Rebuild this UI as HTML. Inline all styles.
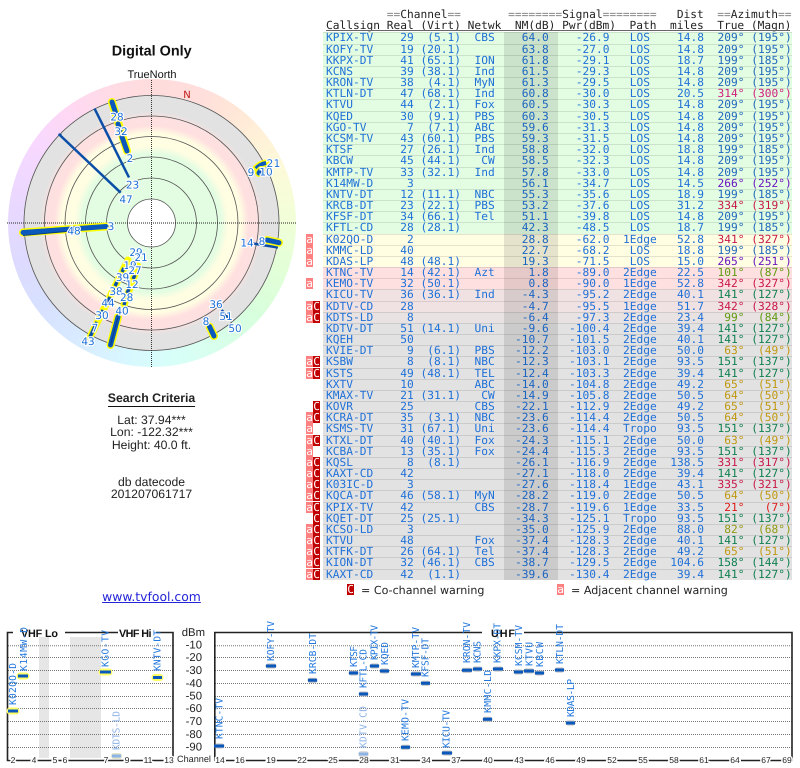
<!DOCTYPE html>
<html><head><meta charset="utf-8"><title>Digital Only</title>
<style>
html,body{margin:0;padding:0;background:#fff;width:800px;height:768px;overflow:hidden}
#w{position:relative;width:800px;height:768px;overflow:hidden;filter:blur(.3px);text-rendering:geometricPrecision}
.wheel{position:absolute;left:7.5px;top:79px;width:288px;height:288px;border-radius:50%;
background:conic-gradient(#ffdcdc 0deg,#ffdedc 20deg,#ffe6d8 35deg,#fff0d8 50deg,#fbfbd8 70deg,#f0ffd8 90deg,#e2ffd8 110deg,#d8ffdc 130deg,#d8ffea 150deg,#d8fff8 170deg,#d8f8ff 190deg,#d8ecff 210deg,#d8e0ff 235deg,#dedaff 255deg,#ead8ff 280deg,#f8d8ff 305deg,#ffd8f2 325deg,#ffdce4 345deg,#ffdcdc 360deg)}
svg{position:absolute;left:0;top:0}
.y{stroke:#ff0;stroke-width:8;stroke-linecap:round;fill:none}
.bl{stroke:#0a58bc;stroke-width:5;stroke-linecap:round;fill:none}
.th{stroke:#0a4ea8;stroke-width:2.5;fill:none}
.yt{stroke:#ff0;stroke-width:7;stroke-linecap:round;fill:none}
.bs{stroke:#0a4ea8;stroke-width:3.5;fill:none}
.rg{fill:none;stroke:#555;stroke-width:.8}
.n{font:10.5px "DejaVu Sans",sans-serif;fill:#1f70d8;stroke:#fff;stroke-width:2.2;paint-order:stroke;text-anchor:middle}
.s{font-family:"Liberation Sans",sans-serif;fill:#111}
.lb{font:9.6px "DejaVu Sans Mono",monospace;fill:#2278de}
.pl{fill:#8db3e6}
.gl{stroke:#777;stroke-width:1;stroke-dasharray:1 1}
.bx{stroke:#222;stroke-width:1.6;fill:none}
.db{font:11.3px "Liberation Sans",sans-serif;fill:#222;text-anchor:end}
.ch{font:8.5px "Liberation Sans",sans-serif;fill:#222;text-anchor:middle;stroke:#fff;stroke-width:3;paint-order:stroke}
.hb{font:bold 10.8px "Liberation Sans",sans-serif;fill:#111}
.h1{stroke:#bbb;stroke-width:5;stroke-linecap:round}
.h2{stroke:#ff6;stroke-width:7;stroke-linecap:round}
.h3{stroke:#0a58bc;stroke-width:3}
.h4{stroke:#8db3e6;stroke-width:3}
.h5{stroke:#e4e4c8;stroke-width:6;stroke-linecap:round}
pre{position:absolute;margin:0;font:11.21px/11px "DejaVu Sans Mono",monospace;color:#222}
pre u{text-decoration:none;color:#888}
table{position:absolute;left:323px;top:32px;width:468.75px;border-collapse:separate;border-spacing:0;table-layout:fixed;font:11.21px/11px "DejaVu Sans Mono",monospace;color:#1f70d8}
td{padding:0;height:11px;box-sizing:border-box;white-space:pre;vertical-align:top;text-align:right;overflow:visible;border-top:1px solid rgba(0,0,0,.1);line-height:10px}
td:first-child{text-align:left;padding-left:3px}
td.c{text-align:center}
tr.t td{height:12px}
tr.g{background:#e2fde2}tr.e{background:#fffde2}tr.p{background:#ffe0e0}tr.q{background:#f0e2e2}tr.x{background:#e8e2e2}tr.d{background:#e2e2e2}
.nm{position:absolute;left:504px;top:32px;width:54px;height:548px;background:rgba(0,0,0,.1)}
.bb{color:#2268bc}.m{color:#d0207c}.cr{color:#c81848}.pu{color:#6a14c0}.ol{color:#5f9a10}.gr{color:#108050}.go{color:#c09810}.re{color:#e01818}.ly{color:#909a10}
.w{position:absolute;width:7px;height:11px;color:#fff;font:11px/11px "DejaVu Sans Mono",monospace;text-align:center}
.wa{left:306px;background:#ff8080}.wc{left:313px;background:#c00000}
.tx{position:absolute;left:0;width:303px;text-align:center;font:12.2px/13px "Liberation Sans",sans-serif;color:#222}
.lg{position:absolute;top:584px;font:11.1px/13px "DejaVu Sans",sans-serif;color:#222;white-space:pre}
</style></head><body><div id="w">

<div class="wheel"></div>
<svg width="800" height="768" viewBox="0 0 800 768">
<defs><radialGradient id="rd" gradientUnits="userSpaceOnUse" cx="151.5" cy="223" r="128">
<stop offset="0" stop-color="#e2fde2"/><stop offset=".54" stop-color="#e2fde2"/><stop offset=".6" stop-color="#fffde2"/><stop offset=".7" stop-color="#fffde2"/><stop offset=".76" stop-color="#ffe0e0"/><stop offset=".82" stop-color="#ffe0e0"/><stop offset=".87" stop-color="#e2e2e2"/><stop offset="1" stop-color="#e2e2e2"/></radialGradient></defs>
<text class="s" x="151.7" y="55.5" font-size="14.4" font-weight="bold" text-anchor="middle">Digital Only</text>
<text class="s" x="152" y="78" font-size="11" text-anchor="middle" fill="#222">TrueNorth</text>
<circle cx="151.5" cy="223" r="128" fill="url(#rd)"/>
<circle cx="151.5" cy="223" r="24" fill="#fff"/>
<circle class="rg" cx="151.5" cy="223" r="24"/><circle class="rg" cx="151.5" cy="223" r="45"/><circle class="rg" cx="151.5" cy="223" r="66"/><circle class="rg" cx="151.5" cy="223" r="86.5"/><circle class="rg" cx="151.5" cy="223" r="107"/><circle class="rg" cx="151.5" cy="223" r="127.5"/>
<line x1="7" y1="223" x2="296" y2="223" stroke="#222" stroke-width=".9" stroke-dasharray="1 1"/>
<line x1="151.5" y1="80" x2="151.5" y2="367" stroke="#222" stroke-width=".9" stroke-dasharray="1 1"/>
<text x="187" y="98" font-family="DejaVu Sans,sans-serif" font-size="10" fill="#c01818" text-anchor="middle">N</text>

<line class="y" x1="112" y1="102" x2="127" y2="151"/>
<line class="bl" x1="112" y1="102" x2="116" y2="114"/><line class="bl" x1="118" y1="124" x2="120" y2="130"/><line class="bl" x1="122" y1="137" x2="127" y2="151"/>
<line class="th" x1="94.5" y1="108.5" x2="129" y2="177.5"/>
<line class="th" x1="58.7" y1="134" x2="120.7" y2="192.7"/>
<path d="M58.5 133.5l3.5.5-2 2.5z" fill="#0a4ea8"/>
<line class="y" x1="23" y1="232.5" x2="106" y2="226.5"/>
<line class="bl" x1="23" y1="232.5" x2="106" y2="226.5" stroke-width="5"/>
<line x1="23" y1="235.5" x2="72" y2="231" stroke="#0a3c80" stroke-width="1"/>
<path d="M256 168.5Q260 164 266 163" class="yt" stroke-width="8"/><path d="M256 168.5Q260 164 266 163" stroke="#0a58bc" stroke-width="4" fill="none"/>
<line class="y" x1="259" y1="173" x2="261" y2="170" stroke-width="6"/><line class="bl" x1="259" y1="173" x2="261" y2="170" stroke-width="3"/>
<line class="th" x1="253" y1="243.5" x2="278" y2="247.5"/>
<line class="y" x1="267" y1="240" x2="279" y2="242.7"/><line class="bl" x1="267" y1="240" x2="279" y2="242.7"/>

<line class="yt" x1="128" y1="260" x2="90" y2="337"/>
<line class="bs" x1="124" y1="268" x2="122" y2="272"/><line class="bs" x1="117" y1="282" x2="115" y2="286"/><line class="bs" x1="110" y1="297" x2="107" y2="303"/><line class="bs" x1="103" y1="310" x2="100" y2="316"/><line class="bs" x1="97" y1="322" x2="90" y2="337"/>
<line class="yt" x1="138" y1="266" x2="124" y2="305"/>
<line class="bs" x1="135" y1="275" x2="133" y2="279"/><line class="bs" x1="129" y1="289" x2="127" y2="293"/><line class="bs" x1="125" y1="301" x2="124" y2="305"/>
<line class="y" x1="118" y1="317" x2="110.5" y2="345"/><line class="bl" x1="118" y1="317" x2="110.5" y2="345"/>
<line x1="118" y1="317" x2="110.5" y2="345" stroke="#0a3c80" stroke-width="1"/>
<line class="y" x1="209.5" y1="326.5" x2="214" y2="336"/><line class="bl" x1="209.5" y1="326.5" x2="214" y2="336"/>
<line class="th" x1="221.7" y1="310" x2="230" y2="320" stroke-width="2"/>

<text class="n" x="117" y="120.5">28</text><text class="n" x="121" y="135">32</text><text class="n" x="130" y="162">2</text><text class="n" x="132.5" y="188.5">23</text><text class="n" x="126" y="203">47</text><text class="n" x="111" y="230">3</text><text class="n" x="74" y="234.5">48</text><text class="n" x="247" y="246.5">14</text><text class="n" x="262" y="245">8</text><text class="n" x="251" y="176">9</text><text class="n" x="266" y="175.5">10</text><text class="n" x="270" y="167">2</text><text class="n" x="277" y="167">1</text>
<text class="n" x="136" y="256">29</text><text class="n" x="141" y="261">21</text><text class="n" x="130" y="269">19</text><text class="n" x="135" y="274">27</text><text class="n" x="122.5" y="281">39</text><text class="n" x="132" y="288">12</text><text class="n" x="116" y="295">38</text><text class="n" x="126.7" y="301">28</text><text class="n" x="108" y="306.5">44</text><text class="n" x="122" y="314.5">40</text><text class="n" x="102" y="319">30</text><text class="n" x="95" y="331.5">7</text><text class="n" x="88" y="345">43</text><text class="n" x="216" y="308">36</text><text class="n" x="226" y="320">51</text><text class="n" x="235" y="332">50</text><text class="n" x="206" y="325">8</text>

<!-- bottom chart bands and grid -->
<rect x="39" y="637" width="10" height="121" fill="#e6e6e6"/><rect x="70" y="637" width="31" height="121" fill="#e6e6e6"/>
<path class="gl" d="M8 645.7H173M8 657.5H173M8 670.5H173M8 683.5H173M8 696.5H173M8 708.5H173M8 721.5H173M8 734.5H173M8 747.5H173"/>
<path class="gl" d="M215 645.7H792M215 657.5H792M215 670.5H792M215 683.5H792M215 696.5H792M215 708.5H792M215 721.5H792M215 734.5H792M215 747.5H792"/>
<path class="bx" d="M13 632.5H7.5V760.5H173V632.5H156M65 632.5H118"/>
<path class="bx" d="M482 632.5H214.8V760.5H792V632.5H524"/>
<text class="hb" x="21" y="637" textLength="37">VHF Lo</text><text class="hb" x="119" y="637" textLength="32.5">VHF Hi</text><text class="hb" x="491" y="637" textLength="24">UHF</text>
<text class="db" x="205" y="636">dBm</text><text class="db" x="202" y="648.5">-10</text><text class="db" x="202" y="661">-20</text><text class="db" x="202" y="674">-30</text><text class="db" x="202" y="687">-40</text><text class="db" x="202" y="699.5">-50</text><text class="db" x="202" y="712">-60</text><text class="db" x="202" y="725">-70</text><text class="db" x="202" y="738">-80</text><text class="db" x="202" y="750.5">-90</text>
<g>
<text class="ch" x="13" y="763">2</text><text class="ch" x="34" y="763">4</text><text class="ch" x="55" y="763">5</text><text class="ch" x="65" y="763">6</text><text class="ch" x="106" y="763">7</text><text class="ch" x="127" y="763">9</text><text class="ch" x="148" y="763">11</text><text class="ch" x="169" y="763">13</text>
<text class="ch" x="194" y="762" style="font-size:9.1px">Channel</text>
<text class="ch" x="220" y="763">14</text><text class="ch" x="240" y="763">16</text><text class="ch" x="271" y="763">19</text><text class="ch" x="302" y="763">22</text><text class="ch" x="333" y="763">25</text><text class="ch" x="364" y="763">28</text><text class="ch" x="395" y="763">31</text><text class="ch" x="426" y="763">34</text><text class="ch" x="456" y="763">37</text><text class="ch" x="488" y="763">40</text><text class="ch" x="519" y="763">43</text><text class="ch" x="550" y="763">46</text><text class="ch" x="581" y="763">49</text><text class="ch" x="612" y="763">52</text><text class="ch" x="643" y="763">55</text><text class="ch" x="674" y="763">58</text><text class="ch" x="704" y="763">61</text><text class="ch" x="735" y="763">64</text><text class="ch" x="766" y="763">67</text><text class="ch" x="787" y="763">69</text>
</g>
<!-- VHF bars -->
<path class="h2" d="M10 711H16M20 676H26M102 672H109M155 677.5H160"/>
<path class="h3" d="M8 711H18M18 676H28M100 672H111M153 677.5H162"/>
<path class="h5" d="M114 756H119"/><path class="h4" d="M112 756H121"/>
<!-- UHF bars -->
<path class="h1" d="M217 746H222M268 666H274M310 680.3H315M351 673H356M361 694H366M372 666H377M382 671H387M403 747.3H408M413 674H419M423 683.3H428M444 753H450M464 670.3H470M475 669H480M485 719.3H490M495 669H501M516 672H521M526 671H532M537 673H542M557 670H562M568 723H573"/>
<path class="h3" d="M214 746H224M266 666H276M308 680.3H317M349 673H358M359 694H368M370 666H379M380 671H389M401 747.3H410M411 674H421M421 683.3H430M442 753H452M462 670.3H472M473 669H482M483 719.3H492M493 669H503M514 672H523M524 671H534M535 673H544M555 670H564M566 723H575"/>
<path class="h5" style="stroke:#ddd" d="M361 754H366"/><path class="h4" d="M359 754H368"/>
<!-- labels -->
<text class="lb" transform="translate(16,705) rotate(-90)" textLength="42">K02QO-D</text>
<text class="lb" transform="translate(27,671) rotate(-90)" textLength="44">K14MW-D</text>
<text class="lb" transform="translate(108.5,667) rotate(-90)" textLength="37">KGO-TV</text>
<text class="lb" transform="translate(160.5,671) rotate(-90)" textLength="41">KNTV-DT</text>
<text class="lb pl" transform="translate(119.5,750) rotate(-90)" textLength="39">KDTS-LD</text>
<text class="lb" transform="translate(222.5,739) rotate(-90)" textLength="41">KTNC-TV</text>
<text class="lb" transform="translate(274,661) rotate(-90)" textLength="40">KOFY-TV</text>
<text class="lb" transform="translate(316,674) rotate(-90)" textLength="41">KRCB-DT</text>
<text class="lb" transform="translate(357,667) rotate(-90)" textLength="21">KTSF</text>
<text class="lb" transform="translate(366.5,688) rotate(-90)" textLength="39">KFTL-CD</text>
<text class="lb" transform="translate(377.5,660) rotate(-90)" textLength="35">KPIX-TV</text>
<text class="lb" transform="translate(388,665) rotate(-90)" textLength="23">KQED</text>
<text class="lb pl" transform="translate(366.5,748) rotate(-90)" textLength="42">KDTV-CD</text>
<text class="lb" transform="translate(408.5,741) rotate(-90)" textLength="42">KEMO-TV</text>
<text class="lb" transform="translate(419,668) rotate(-90)" textLength="41">KMTP-TV</text>
<text class="lb" transform="translate(428.5,677) rotate(-90)" textLength="39">KFSF-DT</text>
<text class="lb" transform="translate(449.5,748) rotate(-90)" textLength="38">KICU-TV</text>
<text class="lb" transform="translate(470,663) rotate(-90)" textLength="41">KRON-TV</text>
<text class="lb" transform="translate(480.5,663) rotate(-90)" textLength="22">KCNS</text>
<text class="lb" transform="translate(491,713) rotate(-90)" textLength="43">KMMC-LD</text>
<text class="lb" transform="translate(500.5,663) rotate(-90)" textLength="40">KKPX-DT</text>
<text class="lb" transform="translate(522,666) rotate(-90)" textLength="41">KCSM-TV</text>
<text class="lb" transform="translate(532.5,666) rotate(-90)" textLength="24">KTVU</text>
<text class="lb" transform="translate(543,667) rotate(-90)" textLength="25">KBCW</text>
<text class="lb" transform="translate(563,664) rotate(-90)" textLength="40">KTLN-DT</text>
<text class="lb" transform="translate(574,717) rotate(-90)" textLength="38">KDAS-LP</text>
</svg>

<div class="tx" style="top:391.5px;font-weight:bold;font-size:12.3px"><span style="border-bottom:1.5px solid #111;padding-bottom:1px">Search Criteria</span></div>
<div class="tx" style="top:413.5px">Lat: 37.94***<br></div>
<div class="tx" style="top:426px">Lon: -122.32***</div>
<div class="tx" style="top:438.5px">Height: 40.0 ft.</div>
<div class="tx" style="top:475.5px">db datecode</div>
<div class="tx" style="top:487.5px">201207061717</div>
<div class="tx" style="top:590px;font:12.4px/14px 'DejaVu Sans',sans-serif;color:#2424d8;text-decoration:underline">www.tvfool.com</div>

<pre style="left:326px;top:9px">         <u>==</u>Channel<u>==</u>       <u>========</u>Signal<u>========</u>   Dist  <u>==</u>Azimuth<u>==</u></pre>
<pre style="left:326px;top:20px">Callsign Real (Virt) Netwk  NM(dB) Pwr(dBm)  Path  miles  True (Magn)</pre>
<div style="position:absolute;left:326px;top:30px;width:464px;height:1px;background:#666"></div>

<table>
<colgroup><col style="width:63.75px"><col style="width:27px"><col style="width:47.25px"><col style="width:47.25px"><col style="width:40.5px"><col style="width:60.75px"><col style="width:60.75px"><col style="width:33.75px"><col style="width:40.5px"><col style="width:47.25px"></colgroup>
<tr class="g t"><td>KPIX-TV</td><td>29</td><td>(5.1)</td><td class="c">CBS</td><td>64.0</td><td>-26.9</td><td class="c">LOS</td><td>14.8</td><td class="bb">209°</td><td class="bb">(195°)</td></tr>
<tr class="g"><td>KOFY-TV</td><td>19</td><td>(20.1)</td><td class="c"></td><td>63.8</td><td>-27.0</td><td class="c">LOS</td><td>14.8</td><td class="bb">209°</td><td class="bb">(195°)</td></tr>
<tr class="g"><td>KKPX-DT</td><td>41</td><td>(65.1)</td><td class="c">ION</td><td>61.8</td><td>-29.1</td><td class="c">LOS</td><td>18.7</td><td class="bb">199°</td><td class="bb">(185°)</td></tr>
<tr class="g"><td>KCNS</td><td>39</td><td>(38.1)</td><td class="c">Ind</td><td>61.5</td><td>-29.3</td><td class="c">LOS</td><td>14.8</td><td class="bb">209°</td><td class="bb">(195°)</td></tr>
<tr class="g"><td>KRON-TV</td><td>38</td><td>(4.1)</td><td class="c">MyN</td><td>61.3</td><td>-29.5</td><td class="c">LOS</td><td>14.8</td><td class="bb">209°</td><td class="bb">(195°)</td></tr>
<tr class="g"><td>KTLN-DT</td><td>47</td><td>(68.1)</td><td class="c">Ind</td><td>60.8</td><td>-30.0</td><td class="c">LOS</td><td>20.5</td><td class="m">314°</td><td class="m">(300°)</td></tr>
<tr class="g t"><td>KTVU</td><td>44</td><td>(2.1)</td><td class="c">Fox</td><td>60.5</td><td>-30.3</td><td class="c">LOS</td><td>14.8</td><td class="bb">209°</td><td class="bb">(195°)</td></tr>
<tr class="g"><td>KQED</td><td>30</td><td>(9.1)</td><td class="c">PBS</td><td>60.3</td><td>-30.5</td><td class="c">LOS</td><td>14.8</td><td class="bb">209°</td><td class="bb">(195°)</td></tr>
<tr class="g"><td>KGO-TV</td><td>7</td><td>(7.1)</td><td class="c">ABC</td><td>59.6</td><td>-31.3</td><td class="c">LOS</td><td>14.8</td><td class="bb">209°</td><td class="bb">(195°)</td></tr>
<tr class="g"><td>KCSM-TV</td><td>43</td><td>(60.1)</td><td class="c">PBS</td><td>59.3</td><td>-31.5</td><td class="c">LOS</td><td>14.8</td><td class="bb">209°</td><td class="bb">(195°)</td></tr>
<tr class="g"><td>KTSF</td><td>27</td><td>(26.1)</td><td class="c">Ind</td><td>58.8</td><td>-32.0</td><td class="c">LOS</td><td>18.8</td><td class="bb">199°</td><td class="bb">(185°)</td></tr>
<tr class="g t"><td>KBCW</td><td>45</td><td>(44.1)</td><td class="c"> CW</td><td>58.5</td><td>-32.3</td><td class="c">LOS</td><td>14.8</td><td class="bb">209°</td><td class="bb">(195°)</td></tr>
<tr class="g"><td>KMTP-TV</td><td>33</td><td>(32.1)</td><td class="c">Ind</td><td>57.8</td><td>-33.0</td><td class="c">LOS</td><td>14.8</td><td class="bb">209°</td><td class="bb">(195°)</td></tr>
<tr class="g"><td>K14MW-D</td><td>3</td><td></td><td class="c"></td><td>56.1</td><td>-34.7</td><td class="c">LOS</td><td>14.5</td><td class="pu">266°</td><td class="pu">(252°)</td></tr>
<tr class="g"><td>KNTV-DT</td><td>12</td><td>(11.1)</td><td class="c">NBC</td><td>55.3</td><td>-35.6</td><td class="c">LOS</td><td>18.9</td><td class="bb">199°</td><td class="bb">(185°)</td></tr>
<tr class="g"><td>KRCB-DT</td><td>23</td><td>(22.1)</td><td class="c">PBS</td><td>53.2</td><td>-37.6</td><td class="c">LOS</td><td>31.2</td><td class="cr">334°</td><td class="cr">(319°)</td></tr>
<tr class="g"><td>KFSF-DT</td><td>34</td><td>(66.1)</td><td class="c">Tel</td><td>51.1</td><td>-39.8</td><td class="c">LOS</td><td>14.8</td><td class="bb">209°</td><td class="bb">(195°)</td></tr>
<tr class="g t"><td>KFTL-CD</td><td>28</td><td>(28.1)</td><td class="c"></td><td>42.3</td><td>-48.5</td><td class="c">LOS</td><td>18.7</td><td class="bb">199°</td><td class="bb">(185°)</td></tr>
<tr class="e"><td>K02QO-D</td><td>2</td><td></td><td class="c"></td><td>28.8</td><td>-62.0</td><td class="c">1Edge</td><td>52.8</td><td class="cr">341°</td><td class="cr">(327°)</td></tr>
<tr class="e"><td>KMMC-LD</td><td>40</td><td></td><td class="c"></td><td>22.7</td><td>-68.2</td><td class="c">LOS</td><td>18.8</td><td class="bb">199°</td><td class="bb">(185°)</td></tr>
<tr class="e"><td>KDAS-LP</td><td>48</td><td>(48.1)</td><td class="c"></td><td>19.3</td><td>-71.5</td><td class="c">LOS</td><td>15.0</td><td class="pu">265°</td><td class="pu">(251°)</td></tr>
<tr class="p"><td>KTNC-TV</td><td>14</td><td>(42.1)</td><td class="c">Azt</td><td>1.8</td><td>-89.0</td><td class="c">2Edge</td><td>22.5</td><td class="ol">101°</td><td class="ol">(87°)</td></tr>
<tr class="p"><td>KEMO-TV</td><td>32</td><td>(50.1)</td><td class="c"></td><td>0.8</td><td>-90.0</td><td class="c">1Edge</td><td>52.8</td><td class="cr">342°</td><td class="cr">(327°)</td></tr>
<tr class="q t"><td>KICU-TV</td><td>36</td><td>(36.1)</td><td class="c">Ind</td><td>-4.3</td><td>-95.2</td><td class="c">2Edge</td><td>40.1</td><td class="gr">141°</td><td class="gr">(127°)</td></tr>
<tr class="q"><td>KDTV-CD</td><td>28</td><td></td><td class="c"></td><td>-4.7</td><td>-95.5</td><td class="c">1Edge</td><td>51.7</td><td class="cr">342°</td><td class="cr">(328°)</td></tr>
<tr class="x"><td>KDTS-LD</td><td>8</td><td></td><td class="c"></td><td>-6.4</td><td>-97.3</td><td class="c">2Edge</td><td>23.4</td><td class="ol">99°</td><td class="ol">(84°)</td></tr>
<tr class="d"><td>KDTV-DT</td><td>51</td><td>(14.1)</td><td class="c">Uni</td><td>-9.6</td><td>-100.4</td><td class="c">2Edge</td><td>39.4</td><td class="gr">141°</td><td class="gr">(127°)</td></tr>
<tr class="d"><td>KQEH</td><td>50</td><td></td><td class="c"></td><td>-10.7</td><td>-101.5</td><td class="c">2Edge</td><td>40.1</td><td class="gr">141°</td><td class="gr">(127°)</td></tr>
<tr class="d"><td>KVIE-DT</td><td>9</td><td>(6.1)</td><td class="c">PBS</td><td>-12.2</td><td>-103.0</td><td class="c">2Edge</td><td>50.0</td><td class="go">63°</td><td class="go">(49°)</td></tr>
<tr class="d t"><td>KSBW</td><td>8</td><td>(8.1)</td><td class="c">NBC</td><td>-12.3</td><td>-103.1</td><td class="c">2Edge</td><td>93.5</td><td class="gr">151°</td><td class="gr">(137°)</td></tr>
<tr class="d"><td>KSTS</td><td>49</td><td>(48.1)</td><td class="c">TEL</td><td>-12.4</td><td>-103.3</td><td class="c">2Edge</td><td>39.4</td><td class="gr">141°</td><td class="gr">(127°)</td></tr>
<tr class="d"><td>KXTV</td><td>10</td><td></td><td class="c">ABC</td><td>-14.0</td><td>-104.8</td><td class="c">2Edge</td><td>49.2</td><td class="go">65°</td><td class="go">(51°)</td></tr>
<tr class="d"><td>KMAX-TV</td><td>21</td><td>(31.1)</td><td class="c"> CW</td><td>-14.9</td><td>-105.8</td><td class="c">2Edge</td><td>50.5</td><td class="go">64°</td><td class="go">(50°)</td></tr>
<tr class="d"><td>KOVR</td><td>25</td><td></td><td class="c">CBS</td><td>-22.1</td><td>-112.9</td><td class="c">2Edge</td><td>49.2</td><td class="go">65°</td><td class="go">(51°)</td></tr>
<tr class="d"><td>KCRA-DT</td><td>35</td><td>(3.1)</td><td class="c">NBC</td><td>-23.6</td><td>-114.4</td><td class="c">2Edge</td><td>50.5</td><td class="go">64°</td><td class="go">(50°)</td></tr>
<tr class="d t"><td>KSMS-TV</td><td>31</td><td>(67.1)</td><td class="c">Uni</td><td>-23.6</td><td>-114.4</td><td class="c">Tropo</td><td>93.5</td><td class="gr">151°</td><td class="gr">(137°)</td></tr>
<tr class="d"><td>KTXL-DT</td><td>40</td><td>(40.1)</td><td class="c">Fox</td><td>-24.3</td><td>-115.1</td><td class="c">2Edge</td><td>50.0</td><td class="go">63°</td><td class="go">(49°)</td></tr>
<tr class="d"><td>KCBA-DT</td><td>13</td><td>(35.1)</td><td class="c">Fox</td><td>-24.4</td><td>-115.3</td><td class="c">2Edge</td><td>93.5</td><td class="gr">151°</td><td class="gr">(137°)</td></tr>
<tr class="d"><td>KQSL</td><td>8</td><td>(8.1)</td><td class="c"></td><td>-26.1</td><td>-116.9</td><td class="c">2Edge</td><td>138.5</td><td class="cr">331°</td><td class="cr">(317°)</td></tr>
<tr class="d"><td>KAXT-CD</td><td>42</td><td></td><td class="c"></td><td>-27.1</td><td>-118.0</td><td class="c">2Edge</td><td>39.4</td><td class="gr">141°</td><td class="gr">(127°)</td></tr>
<tr class="d"><td>K03IC-D</td><td>3</td><td></td><td class="c"></td><td>-27.6</td><td>-118.4</td><td class="c">1Edge</td><td>43.1</td><td class="cr">335°</td><td class="cr">(321°)</td></tr>
<tr class="d t"><td>KQCA-DT</td><td>46</td><td>(58.1)</td><td class="c">MyN</td><td>-28.2</td><td>-119.0</td><td class="c">2Edge</td><td>50.5</td><td class="go">64°</td><td class="go">(50°)</td></tr>
<tr class="d"><td>KPIX-TV</td><td>42</td><td></td><td class="c">CBS</td><td>-28.7</td><td>-119.6</td><td class="c">1Edge</td><td>33.5</td><td class="re">21°</td><td class="re">(7°)</td></tr>
<tr class="d"><td>KQET-DT</td><td>25</td><td>(25.1)</td><td class="c"></td><td>-34.3</td><td>-125.1</td><td class="c">Tropo</td><td>93.5</td><td class="gr">151°</td><td class="gr">(137°)</td></tr>
<tr class="d"><td>KCSO-LD</td><td>3</td><td></td><td class="c"></td><td>-35.0</td><td>-125.9</td><td class="c">2Edge</td><td>88.0</td><td class="ly">82°</td><td class="ly">(68°)</td></tr>
<tr class="d"><td>KTVU</td><td>48</td><td></td><td class="c">Fox</td><td>-37.4</td><td>-128.3</td><td class="c">2Edge</td><td>40.1</td><td class="gr">141°</td><td class="gr">(127°)</td></tr>
<tr class="d"><td>KTFK-DT</td><td>26</td><td>(64.1)</td><td class="c">Tel</td><td>-37.4</td><td>-128.3</td><td class="c">2Edge</td><td>49.2</td><td class="go">65°</td><td class="go">(51°)</td></tr>
<tr class="d t"><td>KION-DT</td><td>32</td><td>(46.1)</td><td class="c">CBS</td><td>-38.7</td><td>-129.5</td><td class="c">2Edge</td><td>104.6</td><td class="gr">158°</td><td class="gr">(144°)</td></tr>
<tr class="d"><td>KAXT-CD</td><td>42</td><td>(1.1)</td><td class="c"></td><td>-39.6</td><td>-130.4</td><td class="c">2Edge</td><td>39.4</td><td class="gr">141°</td><td class="gr">(127°)</td></tr>
</table>
<div class="nm"></div>

<div class="w wa" style="top:234px">a</div><div class="w wa" style="top:245px">a</div><div class="w wa" style="top:256px">a</div><div class="w wa" style="top:278px">a</div>
<div class="w wa" style="top:301px">a</div><div class="w wc" style="top:301px">C</div>
<div class="w wa" style="top:312px">a</div><div class="w wc" style="top:312px">C</div>
<div class="w wa" style="top:356px">a</div><div class="w wc" style="top:356px">C</div>
<div class="w wa" style="top:368px">a</div><div class="w wc" style="top:368px">C</div>
<div class="w wc" style="top:401px">C</div>
<div class="w wa" style="top:412px">a</div><div class="w wc" style="top:412px">C</div>
<div class="w wa" style="top:423px">a</div>
<div class="w wa" style="top:435px">a</div><div class="w wc" style="top:435px">C</div>
<div class="w wa" style="top:446px">a</div>
<div class="w wa" style="top:457px">a</div><div class="w wc" style="top:457px">C</div>
<div class="w wa" style="top:468px">a</div><div class="w wc" style="top:468px">C</div>
<div class="w wa" style="top:479px">a</div><div class="w wc" style="top:479px">C</div>
<div class="w wa" style="top:490px">a</div><div class="w wc" style="top:490px">C</div>
<div class="w wa" style="top:502px">a</div><div class="w wc" style="top:502px">C</div>
<div class="w wc" style="top:513px">C</div>
<div class="w wa" style="top:524px">a</div><div class="w wc" style="top:524px">C</div>
<div class="w wa" style="top:535px">a</div><div class="w wc" style="top:535px">C</div>
<div class="w wa" style="top:546px">a</div><div class="w wc" style="top:546px">C</div>
<div class="w wa" style="top:557px">a</div><div class="w wc" style="top:557px">C</div>
<div class="w wa" style="top:569px">a</div><div class="w wc" style="top:569px">C</div>

<div class="w wc" style="left:347px;top:584px">C</div><div class="lg" style="left:361px">= Co-channel warning</div>
<div class="w wa" style="left:557px;top:584px">a</div><div class="lg" style="left:571px">= Adjacent channel warning</div>

</div></body></html>
